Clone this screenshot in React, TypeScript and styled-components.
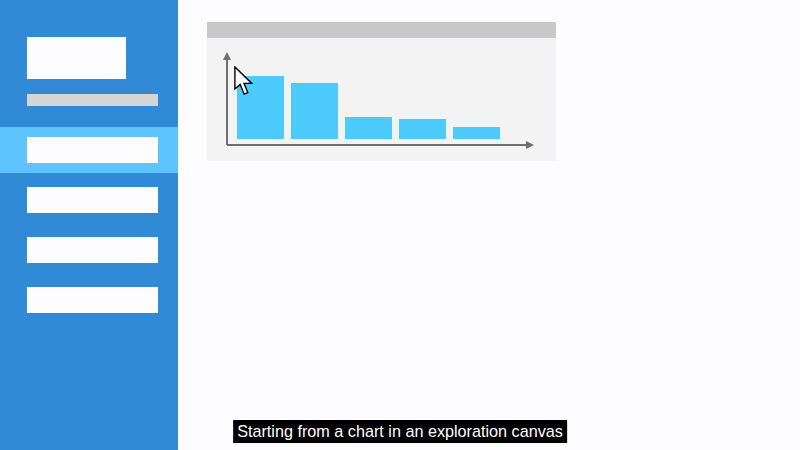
import React from "react";
import styled, { createGlobalStyle } from "styled-components";

const Global = createGlobalStyle`
  html, body { margin: 0; padding: 0; background: #fdfcfe; }
  body { font-family: "Liberation Sans", Arial, sans-serif; }
`;

const Page = styled.div`
  position: relative;
  width: 800px;
  height: 450px;
  display: flex;
  overflow: hidden;
  background: #fdfcfe;
`;

const Sidebar = styled.nav`
  width: 178px;
  flex: none;
  background: #318ad6;
  display: flex;
  flex-direction: column;
  padding-top: 37px;
  box-sizing: border-box;
`;

const Logo = styled.div`
  margin-left: 27px;
  width: 99px;
  height: 42px;
  background: #fdfcfe;
`;

const Search = styled.div`
  margin: 15px 0 0 27px;
  width: 131px;
  height: 12px;
  background: #d5d5d5;
`;

const MenuList = styled.div`
  margin-top: 21px;
  display: flex;
  flex-direction: column;
`;

const MenuRow = styled.div<{ $active?: boolean }>`
  height: 50px;
  display: flex;
  align-items: flex-start;
  padding-top: 14px;
  padding-left: 27px;
  box-sizing: border-box;
  background: ${(p) => (p.$active ? "#5ec4fd" : "transparent")};
  &:first-child {
    height: 46px;
    padding-top: 10px;
  }
`;

const MenuItem = styled.div`
  width: 131px;
  height: 26px;
  background: #fdfcfe;
`;

const Main = styled.main`
  flex: 1;
  padding: 22px 0 0 29px;
`;

const Card = styled.section`
  width: 349px;
  display: flex;
  flex-direction: column;
`;

const CardHeader = styled.div`
  height: 16px;
  background: #c8c7c9;
`;

const CardBody = styled.div`
  position: relative;
  height: 123px;
  background: #f4f3f4;
`;

const Cursor = styled.svg`
  position: absolute;
  left: 27px;
  top: 28px;
`;

const Caption = styled.div`
  position: absolute;
  left: 50%;
  bottom: 7px;
  transform: translateX(-50%);
  background: #000;
  color: #fff;
  font-size: 16.2px;
  line-height: 23px;
  padding: 0 4px;
  white-space: nowrap;
`;

const bars = [
  { x: 30, top: 38 },
  { x: 84, top: 45 },
  { x: 138, top: 79 },
  { x: 192, top: 81 },
  { x: 246, top: 89 },
];

function Chart() {
  return (
    <svg width="349" height="123" viewBox="0 0 349 123">
      {bars.map((b) => (
        <rect key={b.x} x={b.x} y={b.top} width={47} height={101 - b.top} fill="#4ecbfd" />
      ))}
      <line x1="20" y1="20" x2="20" y2="107" stroke="#6f6f6f" strokeWidth="2" />
      <polygon points="20,14 16,22 24,22" fill="#6f6f6f" />
      <line x1="20" y1="107" x2="320" y2="107" stroke="#6f6f6f" strokeWidth="2" />
      <polygon points="327,107 319,103 319,111" fill="#6f6f6f" />
    </svg>
  );
}

export default function App() {
  return (
    <Page>
      <Global />
      <Sidebar>
        <Logo />
        <Search />
        <MenuList>
          <MenuRow $active>
            <MenuItem />
          </MenuRow>
          <MenuRow>
            <MenuItem />
          </MenuRow>
          <MenuRow>
            <MenuItem />
          </MenuRow>
          <MenuRow>
            <MenuItem />
          </MenuRow>
        </MenuList>
      </Sidebar>
      <Main>
        <Card>
          <CardHeader />
          <CardBody>
            <Chart />
            <Cursor width="20" height="30" viewBox="0 0 13 19.5">
              <path
                d="M0.6 0.6 L0.6 15 L4 12 L6.6 18.3 L9 17.3 L6.5 11.3 L11.5 11.3 Z"
                fill="#fff"
                stroke="#000"
                strokeWidth="0.9"
                strokeLinejoin="miter"
              />
            </Cursor>
          </CardBody>
        </Card>
      </Main>
      <Caption>Starting from a chart in an exploration canvas</Caption>
    </Page>
  );
}
